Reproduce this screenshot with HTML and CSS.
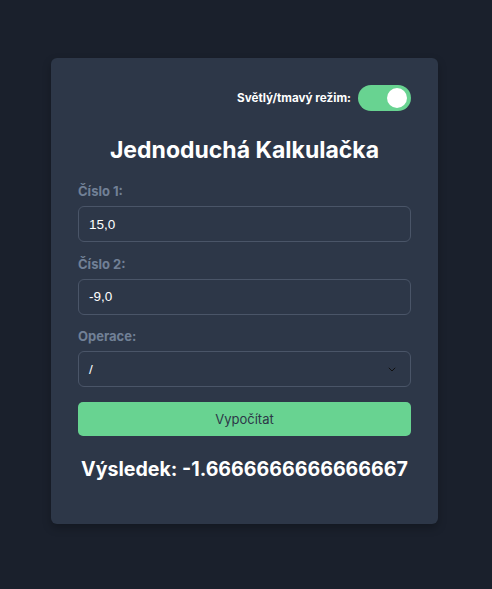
FILE: index.html
```html
<!DOCTYPE html>
<html lang="cs">
<head>
<meta charset="utf-8">
<title>Jednoduchá Kalkulačka</title>
<link rel="stylesheet" href="styles.css">
</head>
<body>
<div class="card">
  <div class="mode-row">
    <span class="mode-label">Světlý/tmavý režim:</span>
    <span class="toggle"><span class="knob"></span></span>
  </div>
  <h1 class="title">Jednoduchá Kalkulačka</h1>
  <label class="label">Číslo 1:</label>
  <div class="field">15,0</div>
  <label class="label">Číslo 2:</label>
  <div class="field">-9,0</div>
  <label class="label">Operace:</label>
  <div class="field select">
    <span>/</span>
    <svg class="chev" width="8" height="5" viewBox="0 0 8 5"><path d="M0.8 0.8 L4 4 L7.2 0.8" fill="none" stroke="#111" stroke-width="1"/></svg>
  </div>
  <button class="btn">Vypočítat</button>
  <div class="result">Výsledek: -1.6666666666666667</div>
</div>
</body>
</html>
```
FILE: styles.css
```css
html, body {
  margin: 0;
  padding: 0;
}
body {
  background: #1a202c;
  height: 589px;
  padding: 58px 0 0 51px;
  box-sizing: border-box;
  display: flex;
  flex-direction: column;
  align-items: flex-start;
  font-family: Inter, "Liberation Sans", sans-serif;
}
.card {
  width: 387px;
  box-sizing: border-box;
  background: #2d3748;
  border-radius: 6px;
  padding: 27px 27px 43px 27px;
  box-shadow: 0 4px 8px rgba(0,0,0,0.25);
  display: flex;
  flex-direction: column;
}
.mode-row {
  display: flex;
  justify-content: flex-end;
  align-items: center;
  gap: 7px;
  height: 26px;
}
.mode-label {
  color: #ffffff;
  font-size: 11.7px;
  font-weight: 700;
}
.toggle {
  width: 53px;
  height: 26px;
  border-radius: 13px;
  background: #68d391;
  position: relative;
}
.knob {
  position: absolute;
  right: 4px;
  top: 3px;
  width: 20px;
  height: 20px;
  border-radius: 50%;
  background: #ffffff;
}
.title {
  margin: 24px 0 0 0;
  font-size: 23px;
  line-height: 30px;
  font-weight: 700;
  color: #ffffff;
  text-align: center;
}
.label {
  display: block;
  margin-top: 18px;
  font-size: 13px;
  line-height: 16px;
  font-weight: 700;
  color: #718096;
}
.field {
  margin-top: 7px;
  height: 36px;
  box-sizing: border-box;
  border: 1px solid #4a5568;
  border-radius: 6px;
  padding: 0 10px;
  display: flex;
  align-items: center;
  color: #ffffff;
  font-family: "Liberation Sans", Arial, sans-serif;
  font-size: 13.5px;
}
.field + .label {
  margin-top: 13.5px;
}
.select {
  justify-content: space-between;
}
.chev {
  margin-right: 4px;
}
.btn {
  margin-top: 15px;
  height: 34px;
  border: none;
  border-radius: 5px;
  background: #68d391;
  color: #2d3748;
  font-family: Inter, "Liberation Sans", sans-serif;
  font-size: 13px;
}
.result {
  margin-top: 21px;
  text-align: center;
  color: #ffffff;
  font-size: 19.6px;
  line-height: 24px;
  font-weight: 700;
  white-space: nowrap;
}
```
